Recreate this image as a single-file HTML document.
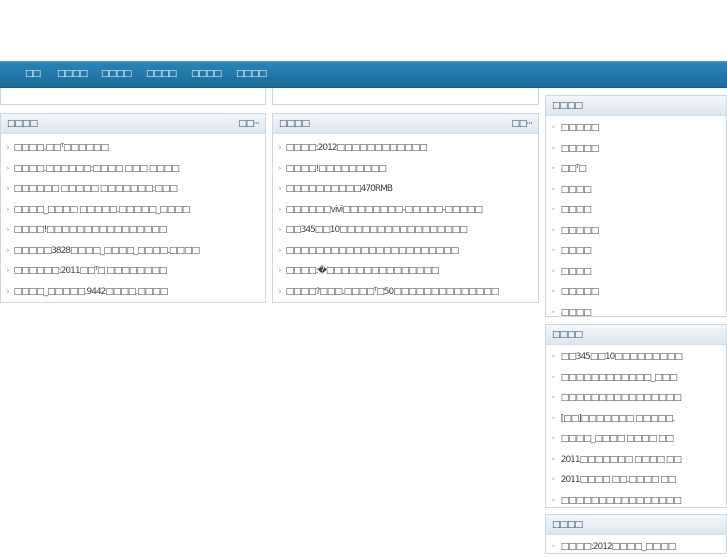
<!DOCTYPE html>
<html><head><meta charset="utf-8"><style>
*{margin:0;padding:0;box-sizing:border-box}
body{width:727px;height:545px;overflow:hidden;background:#fff;font-family:"DejaVu Sans","Liberation Sans",sans-serif;font-size:9px;color:#444;position:relative;letter-spacing:-1px}
.nav{position:absolute;left:0;top:61px;width:727px;height:27px;background:linear-gradient(#2c86b8,#1a6b9c);border-top:1px solid #4a9bc8;border-bottom:1px solid #16577e}
.nav span{position:absolute;top:7px;color:#fff;font-size:9px}
.box{position:absolute;border:1px solid #c9d9e6;background:#fff}
.hd{height:20px;background:linear-gradient(#f4f7fa,#dde6ee);border-bottom:1px solid #d3dfe9;padding:5px 0 0 6px;color:#2a4a66;position:relative}
.hd b{font-weight:normal;position:absolute;right:6px;top:5px}
ul{list-style:none;padding:4px 0 0 5px}
li{height:20.5px;line-height:20.5px;white-space:nowrap;overflow:hidden}
li:before{content:"›";color:#aaa;margin-right:5px}
.r li:before{content:"•";color:#ccc;font-size:8px;margin-right:6px}
</style></head><body>
<div class="nav">
<span style="left:25px">□□</span><span style="left:57px">□□□□</span><span style="left:101px">□□□□</span><span style="left:146px">□□□□</span><span style="left:191px">□□□□</span><span style="left:236px">□□□□</span>
</div>
<div class="box" style="left:0;top:88px;width:266px;height:17px;border-top:none"></div>
<div class="box" style="left:272px;top:88px;width:267px;height:17px;border-top:none"></div>
<div class="box" style="left:0;top:113px;width:266px;height:190px">
<div class="hd">□□□□<b>□□···</b></div>
<ul>
<li>□□□□.□□ᵀ□□□□□□</li>
<li>□□□□.□□□□□□:□□□□ □□□ □□□□</li>
<li>□□□□□□ □□□□□ □□□□□□□:□□□</li>
<li>□□□□_□□□□ □□□□□.□□□□□_□□□□</li>
<li>□□□□!□□□□□□□□□□□□□□□□</li>
<li>□□□□□3828□□□□_□□□□_□□□□.□□□□</li>
<li>□□□□□□:2011□□ᵀ□ □□□□□□□□</li>
<li>□□□□_□□□□□.9442□□□□.□□□□</li>
</ul></div>
<div class="box" style="left:272px;top:113px;width:267px;height:190px">
<div class="hd">□□□□<b>□□···</b></div>
<ul>
<li>□□□□:2012□□□□□□□□□□□□</li>
<li>□□□□!□□□□□□□□□</li>
<li>□□□□□□□□□□470RMB</li>
<li>□□□□□□vivi□□□□□□□□-□□□□□-□□□□□</li>
<li>□□345□□10□□□□□□□□□□□□□□□□□</li>
<li>□□□□□□□□□□□□□□□□□□□□□□□</li>
<li>□□□□:�□□□□□□□□□□□□□□□</li>
<li>□□□□?□□□.□□□□ᵀ□50□□□□□□□□□□□□□□</li>
</ul></div>
<div class="box r" style="left:545px;top:95px;width:182px;height:222px">
<div class="hd">□□□□</div>
<ul style="padding-top:2px">
<li>□□□□□</li><li>□□□□□</li><li>□□ᵀ□</li><li>□□□□</li><li>□□□□</li><li>□□□□□</li><li>□□□□</li><li>□□□□</li><li>□□□□□</li><li>□□□□</li>
</ul></div>
<div class="box r" style="left:545px;top:324px;width:182px;height:184px">
<div class="hd">□□□□</div>
<ul style="padding-top:2px">
<li>□□345□□10□□□□□□□□□</li><li>□□□□□□□□□□□□_□□□</li><li>□□□□□□□□□□□□□□□□</li><li>[□□]□□□□□□□ □□□□□.</li><li>□□□□_□□□□ □□□□ □□</li><li>2011□□□□□□□ □□□□ □□</li><li>2011□□□□ □□.□□□□ □□</li><li>□□□□□□□□□□□□□□□□</li>
</ul></div>
<div class="box r" style="left:545px;top:514px;width:182px;height:40px">
<div class="hd">□□□□</div>
<ul style="padding-top:2px"><li>□□□□:2012□□□□_□□□□</li></ul></div>
</body></html>
